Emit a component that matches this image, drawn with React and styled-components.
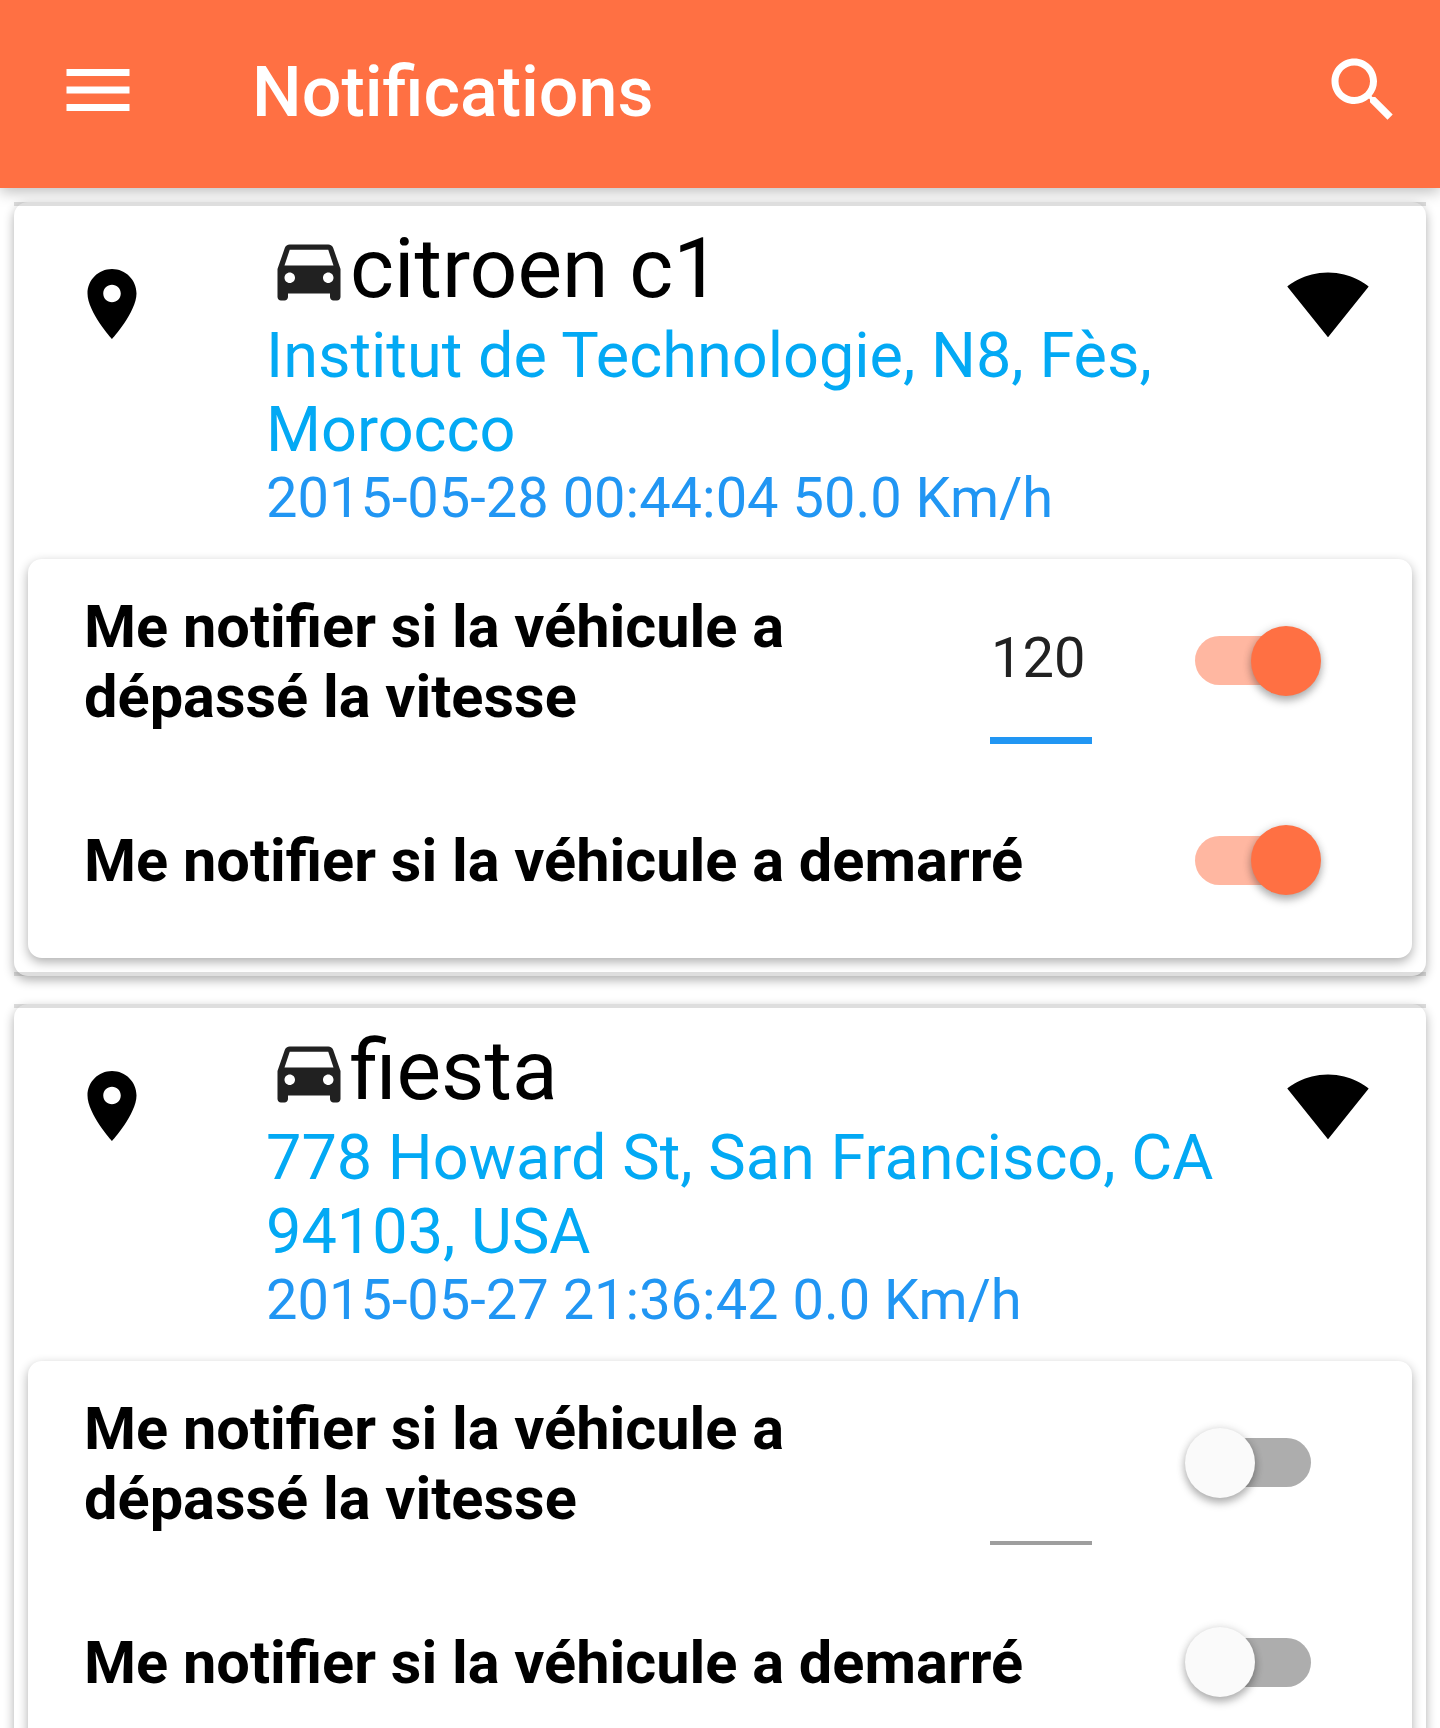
import React from "react";
import styled, { createGlobalStyle } from "styled-components";

const GlobalStyle = createGlobalStyle`
  * { box-sizing: border-box; }
  body {
    margin: 0;
    background: #fff;
    font-family: Roboto, "Noto Sans", sans-serif;
    color: #000;
  }
`;

const Screen = styled.div`
  display: flex;
  flex-direction: column;
  width: 1440px;
  height: 1728px;
  overflow: hidden;
  background: #fff;
`;

const AppBar = styled.header`
  display: flex;
  align-items: center;
  flex: none;
  height: 188px;
  padding: 0 35px 8px 56px;
  background: #ff7043;
  color: #fff;
  box-shadow: 0 4px 14px rgba(0, 0, 0, 0.26);
`;

const Title = styled.h1`
  flex: 1;
  margin: 0 0 0 112px;
  font-size: 70px;
  font-weight: 500;
  line-height: 82px;
  padding-top: 4px;
`;

const Glyph = styled.svg`
  display: block;
  flex: none;
  width: 84px;
  height: 84px;
  fill: ${(p) => p.$color || "currentColor"};
`;

const List = styled.main`
  display: flex;
  flex-direction: column;
  gap: 28px;
  padding: 14px 14px 0;
`;

const VehicleCard = styled.article`
  display: flex;
  flex-direction: column;
  flex: none;
  height: 774px;
  border-radius: 14px;
  background: #fff;
  box-shadow: 0 4px 11px rgba(0, 0, 0, 0.32);
`;

const Rule = styled.div`
  flex: none;
  height: 3.5px;
  background: rgba(0, 0, 0, 0.13);
`;

const Summary = styled.section`
  display: flex;
  align-items: flex-start;
  height: 353.5px;
  padding: 13.5px 56px 0;
`;

const SideIcon = styled.div`
  margin-top: 43px;
`;

const Info = styled.div`
  flex: 1;
  margin-left: 112px;
`;

const Name = styled.h2`
  display: flex;
  margin: 0;
  font-size: 84px;
  font-weight: 400;
  line-height: 99px;
`;

const NameIcon = styled.span`
  margin: 8px -0.5px 0 0.5px;
`;

const Address = styled.p`
  width: 980px;
  margin: 1px 0 -2px;
  color: #03a9f4;
  font-size: 63px;
  line-height: 74px;
`;

const Stamp = styled.p`
  margin: 0;
  color: #2196f3;
  font-size: 56px;
  line-height: 66px;
`;

const Options = styled.section`
  flex: none;
  height: 399px;
  margin: 0 14px 14px;
  border-radius: 14px;
  background: #fff;
  box-shadow: 0 4px 11px rgba(0, 0, 0, 0.32);
`;

const Row = styled.div`
  display: flex;
  align-items: center;
  height: ${(p) => p.$height}px;
  padding: 0 91px 0 56px;
`;

const Label = styled.div`
  width: ${(p) => p.$width}px;
  padding-top: ${(p) => p.$drop || 0}px;
  font-size: 59.5px;
  font-weight: 700;
  line-height: 70px;
`;

const Field = styled.div`
  display: flex;
  flex-direction: column;
  align-self: flex-start;
  width: 101.5px;
  height: 119px;
  margin: 66px 0 0;
  color: #212121;
  font-size: 56px;
  line-height: 66px;
`;

const Value = styled.span`
  height: 112.5px;
  padding-left: 1px;
`;

const Underline = styled.div`
  height: ${(p) => (p.$active ? 7 : 3.5)}px;
  margin-top: ${(p) => (p.$active ? 0 : 1.5)}px;
  background: ${(p) => (p.$active ? "#2196f3" : "#9e9e9e")};
`;

const SwitchBox = styled.div`
  position: relative;
  display: flex;
  align-items: center;
  justify-content: center;
  width: 136.5px;
  height: 70px;
  margin-left: auto;
`;

const Track = styled.div`
  width: 116px;
  height: 49px;
  border-radius: 24.5px;
  background: ${(p) => (p.$on ? "#ffb7a1" : "#adadad")};
`;

const Thumb = styled.div`
  position: absolute;
  top: 0;
  ${(p) => (p.$on ? "right: 0;" : "left: 0;")}
  width: 70px;
  height: 70px;
  border-radius: 50%;
  background: ${(p) => (p.$on ? "#ff7043" : "#fafafa")};
  box-shadow: 0 5px 8px rgba(0, 0, 0, 0.28), 0 0 10px rgba(0, 0, 0, 0.12);
`;

const PATHS = {
  menu: "M3 18h18v-2H3v2zm0-5h18v-2H3v2zm0-7v2h18V6H3z",
  search:
    "M15.5 14h-.79l-.28-.27C15.41 12.59 16 11.11 16 9.5 16 5.91 13.09 3 9.5 3S3 5.91 3 9.5 5.91 16 9.5 16c1.61 0 3.09-.59 4.23-1.57l.27.28v.79l5 4.99L20.49 19l-4.99-5zm-6 0C7.01 14 5 11.99 5 9.5S7.01 5 9.5 5 14 7.01 14 9.5 11.99 14 9.5 14z",
  place:
    "M12 2C8.13 2 5 5.13 5 9c0 5.25 7 13 7 13s7-7.75 7-13c0-3.87-3.13-7-7-7zm0 9.5c-1.38 0-2.5-1.12-2.5-2.5s1.12-2.5 2.5-2.5 2.5 1.12 2.5 2.5-1.12 2.5-2.5 2.5z",
  car: "M18.92 6.01C18.72 5.42 18.16 5 17.5 5h-11c-.66 0-1.21.42-1.42 1.01L3 12v8c0 .55.45 1 1 1h1c.55 0 1-.45 1-1v-1h12v1c0 .55.45 1 1 1h1c.55 0 1-.45 1-1v-8l-2.08-5.99zM6.5 16c-.83 0-1.5-.67-1.5-1.5S5.67 13 6.5 13s1.5.67 1.5 1.5S7.33 16 6.5 16zm11 0c-.83 0-1.5-.67-1.5-1.5s.67-1.5 1.5-1.5 1.5.67 1.5 1.5-.67 1.5-1.5 1.5zM5 11l1.5-4.5h11L19 11H5z",
  signal:
    "M12.01 21.49L23.64 7c-.45-.34-4.93-4-11.64-4C5.28 3 .81 6.66.36 7l11.63 14.49.01.01.01-.01z",
};

function Icon({ name, color }) {
  return (
    <Glyph viewBox="0 0 24 24" $color={color} aria-hidden="true">
      <path d={PATHS[name]} />
    </Glyph>
  );
}

function Switch({ on }) {
  return (
    <SwitchBox role="switch" aria-checked={on}>
      <Track $on={on} />
      <Thumb $on={on} />
    </SwitchBox>
  );
}

function Vehicle({ name, address, stamp, speed, speedAlert, startAlert }) {
  return (
    <VehicleCard>
      <Rule />
      <Summary>
        <SideIcon>
          <Icon name="place" />
        </SideIcon>
        <Info>
          <Name>
            <NameIcon>
              <Icon name="car" color="#212121" />
            </NameIcon>
            {name}
          </Name>
          <Address>{address}</Address>
          <Stamp>{stamp}</Stamp>
        </Info>
        <SideIcon>
          <Icon name="signal" />
        </SideIcon>
      </Summary>
      <Options>
        <Row $height={203}>
          <Label $width={906} $drop={3}>
            Me notifier si la véhicule a
            <br />
            dépassé la vitesse
          </Label>
          <Field>
            <Value>{speed}</Value>
            <Underline $active={Boolean(speed)} />
          </Field>
          <Switch on={speedAlert} />
        </Row>
        <Row $height={196}>
          <Label $width={1000} $drop={2}>
            Me notifier si la véhicule a demarré
          </Label>
          <Switch on={startAlert} />
        </Row>
      </Options>
      <Rule />
    </VehicleCard>
  );
}

const VEHICLES = [
  {
    name: "citroen c1",
    address: "Institut de Technologie, N8, Fès, Morocco",
    stamp: "2015-05-28 00:44:04 50.0 Km/h",
    speed: "120",
    speedAlert: true,
    startAlert: true,
  },
  {
    name: "fiesta",
    address: "778 Howard St, San Francisco, CA 94103, USA",
    stamp: "2015-05-27 21:36:42 0.0 Km/h",
    speed: "",
    speedAlert: false,
    startAlert: false,
  },
];

export default function App() {
  return (
    <Screen>
      <GlobalStyle />
      <AppBar>
        <Icon name="menu" />
        <Title>Notifications</Title>
        <Icon name="search" />
      </AppBar>
      <List>
        {VEHICLES.map((v) => (
          <Vehicle key={v.name} {...v} />
        ))}
      </List>
    </Screen>
  );
}
